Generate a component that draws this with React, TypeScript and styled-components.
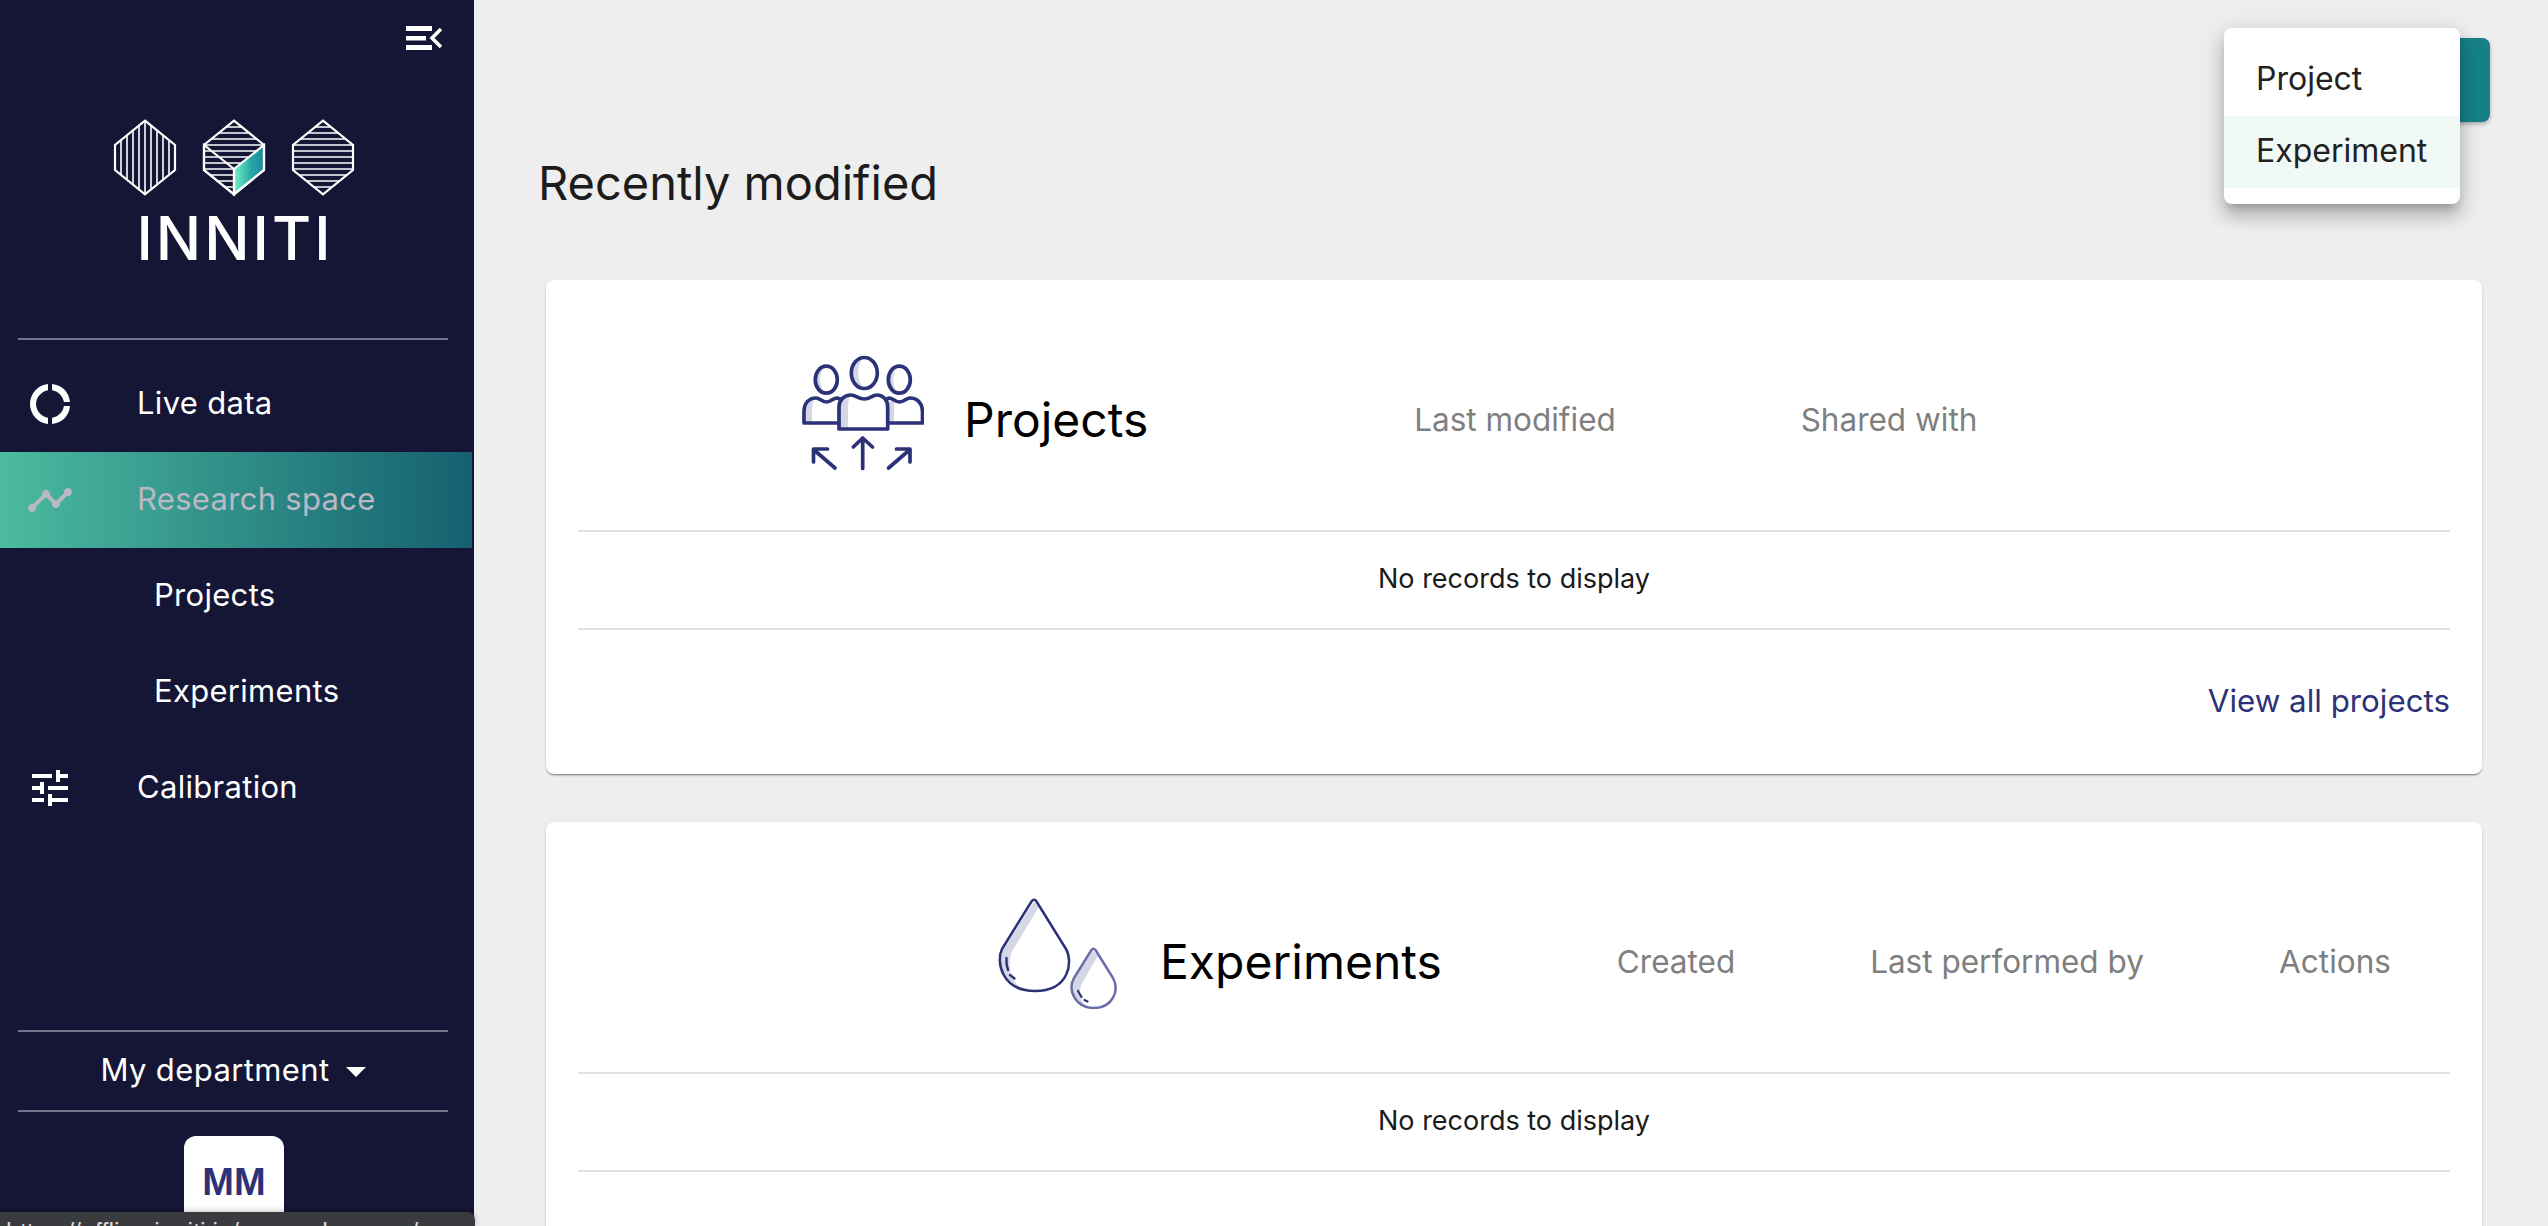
import React from "react";
import styled, { createGlobalStyle } from "styled-components";

const INK = "#2c3278";
const SHADE = "#d5d6e6";
const BASE = `"Inter", "Noto Sans", "Liberation Sans", sans-serif`;

const Global = createGlobalStyle`
  html, body { margin: 0; padding: 0; height: 100%; overflow: hidden; background: #eeeeee; }
  #root { height: 100%; }
  * { box-sizing: border-box; }
  body { font-family: ${BASE}; }
`;

const Page = styled.div`
  display: flex;
  height: 1226px;
  width: 2548px;
  position: relative;
  overflow: hidden;
`;

const Sidebar = styled.aside`
  width: 474px;
  flex: none;
  height: 100%;
  background: #151535;
  color: #fff;
  display: flex;
  flex-direction: column;
`;

const ToggleRow = styled.div`
  height: 118px;
  padding: 26px 32px 0 0;
  display: flex;
  justify-content: flex-end;
  align-items: flex-start;
`;

const LogoArt = styled.svg`
  display: block;
  width: 244px;
  height: 78px;
  margin-left: 112px;
`;

const Wordmark = styled.div`
  margin: 12px 4px 0 0;
  height: 60px;
  line-height: 60px;
  text-align: center;
  font-size: 60px;
  font-weight: 500;
  letter-spacing: 3px;
  color: #fff;
`;

const Rule = styled.div<{ $top?: number }>`
  height: 2px;
  margin: ${(p) => p.$top ?? 0}px 26px 0 18px;
  background: #74748a;
`;

const Nav = styled.nav`
  margin-top: 16px;
  display: flex;
  flex-direction: column;
`;

const NavItem = styled.div<{ $active?: boolean; $sub?: boolean }>`
  height: 96px;
  width: 472px;
  display: flex;
  align-items: center;
  padding-left: ${(p) => (p.$sub ? 154 : 26)}px;
  gap: 63px;
  font-size: 31px;
  letter-spacing: 0.3px;
  color: ${(p) => (p.$active ? "#b9b9c6" : "#fff")};
  background: ${(p) =>
    p.$active ? "linear-gradient(90deg, #4bbb9f 0%, #156070 100%)" : "transparent"};
`;

const NavLabel = styled.span`
  position: relative;
  top: -2px;
`;

const NavIcon = styled.svg`
  width: 48px;
  height: 48px;
  flex: none;
  fill: currentColor;
`;

const Bottom = styled.div`
  margin-top: auto;
  height: 196px;
  display: flex;
  flex-direction: column;
`;

const Department = styled.div`
  height: 78px;
  padding: 0 8px 3px 0;
  display: flex;
  align-items: center;
  justify-content: center;
  gap: 16px;
  font-size: 31px;
  letter-spacing: 0.4px;
`;

const Caret = styled.span`
  width: 0;
  height: 0;
  margin-top: 4px;
  border-left: 10px solid transparent;
  border-right: 10px solid transparent;
  border-top: 10px solid #fff;
`;

const TileRow = styled.div`
  padding: 24px 6px 0 0;
  display: flex;
  justify-content: center;
`;

const Tile = styled.div`
  width: 100px;
  height: 90px;
  border-radius: 12px 12px 0 0;
  background: linear-gradient(180deg, #fff 0%, #fff 75%, #ececec 100%);
  display: flex;
  align-items: center;
  justify-content: center;
  padding-top: 3px;
  color: ${INK};
  font-family: "Liberation Sans", sans-serif;
  font-weight: 700;
  font-size: 38px;
`;

const StatusBubble = styled.div`
  position: absolute;
  left: 0;
  bottom: 0;
  width: 475px;
  height: 14px;
  padding: 5px 0 0 6px;
  background: #3a3b3e;
  border-radius: 0 8px 0 0;
  box-shadow: 0 0 6px rgba(0, 0, 0, 0.25);
  color: #d8d8d8;
  font-family: "Liberation Sans", sans-serif;
  font-size: 25px;
  line-height: 30px;
  white-space: nowrap;
  overflow: hidden;
`;

const Main = styled.main`
  flex: 1;
  min-width: 0;
  height: 100%;
  padding: 38px 58px 0 64px;
  background: #eeeeee;
  display: flex;
  flex-direction: column;
`;

const Toolbar = styled.div`
  flex: none;
  height: 84px;
  display: flex;
  justify-content: flex-end;
`;

const AddWrap = styled.div`
  position: relative;
  width: 200px;
  height: 84px;
`;

const AddButton = styled.div`
  width: 100%;
  height: 100%;
  border-radius: 8px;
  background: #16808a;
  box-shadow: 0 2px 4px rgba(0, 0, 0, 0.3);
`;

const Menu = styled.div`
  position: absolute;
  top: -10px;
  right: 30px;
  width: 236px;
  padding: 16px 0;
  background: #fff;
  border-radius: 8px;
  box-shadow: 0 8px 8px -5px rgba(0, 0, 0, 0.2), 0 13px 16px 2px rgba(0, 0, 0, 0.14),
    0 5px 23px 3px rgba(0, 0, 0, 0.12);
`;

const MenuItem = styled.div<{ $hover?: boolean }>`
  height: 72px;
  padding: 0 0 3px 32px;
  display: flex;
  align-items: center;
  font-size: 32px;
  color: #222;
  background: ${(p) => (p.$hover ? "#f0f9f6" : "transparent")};
`;

const Title = styled.h1`
  margin: 31px 0 0;
  height: 60px;
  line-height: 60px;
  font-size: 47px;
  font-weight: 400;
  color: #1c1c1c;
`;

const Card = styled.section`
  flex: none;
  margin: 48px 8px 0;
  padding: 0 32px;
  background: #fff;
  border-radius: 8px;
  box-shadow: 0 2px 2px -1px rgba(0, 0, 0, 0.45), 0 1px 3px rgba(0, 0, 0, 0.12);
  &:first-of-type {
    margin-top: 67px;
  }
`;

const HeaderRow = styled.div<{ $cols: string }>`
  height: 252px;
  padding: 28px 0 0;
  display: grid;
  grid-template-columns: ${(p) => p.$cols};
  align-items: center;
  border-bottom: 2px solid #e0e0e0;
`;

const Lead = styled.div<{ $pad: number; $gap: number }>`
  display: flex;
  align-items: center;
  padding-left: ${(p) => p.$pad}px;
  gap: ${(p) => p.$gap}px;
`;

const CardTitle = styled.h2`
  margin: 0;
  font-size: 48px;
  font-weight: 400;
  color: #000;
`;

const ColumnHead = styled.div`
  text-align: center;
  font-size: 31.5px;
  color: #7f7f7f;
`;

const EmptyRow = styled.div`
  height: 98px;
  padding-bottom: 3px;
  display: flex;
  align-items: center;
  justify-content: center;
  border-bottom: 2px solid #e0e0e0;
  font-size: 27px;
  color: #1a1a1a;
`;

const CardFooter = styled.div`
  height: 144px;
  padding-bottom: 3px;
  display: flex;
  align-items: center;
  justify-content: flex-end;
  font-size: 31.3px;
  color: ${INK};
`;

const Drawing = styled.svg<{ $lift: number }>`
  display: block;
  flex: none;
  margin-top: -${(p) => p.$lift}px;
`;

const Toggle = () => (
  <svg width="36" height="24" viewBox="0 0 36 24" fill="#fff">
    <rect x="0" y="0" width="26" height="5" />
    <rect x="0" y="10" width="20" height="4.5" />
    <rect x="0" y="19" width="26" height="5" />
    <path d="M35 3 L26 12 L35 21" fill="none" stroke="#fff" strokeWidth="3.6" />
  </svg>
);

const range = (from: number, to: number, step: number) => {
  const out: number[] = [];
  for (let v = from; v <= to; v += step) out.push(v);
  return out;
};

const hex = (cx: number) =>
  `${cx},120.6 ${cx + 30},145 ${cx + 30},170 ${cx},194.4 ${cx - 30},170 ${cx - 30},145`;

const Logo = () => (
  <LogoArt viewBox="112 118 244 78">
    <defs>
      <clipPath id="hexA">
        <polygon points={hex(145)} />
      </clipPath>
      <clipPath id="hexB">
        <polygon points={hex(234)} />
      </clipPath>
      <clipPath id="hexC">
        <polygon points={hex(323)} />
      </clipPath>
      <linearGradient id="face" x1="0" y1="0" x2="1" y2="0">
        <stop offset="0" stopColor="#72f2c9" />
        <stop offset="0.55" stopColor="#2aa8a6" />
        <stop offset="1" stopColor="#1b8a9c" />
      </linearGradient>
    </defs>
    <g clipPath="url(#hexA)" stroke="#fff" strokeWidth="1.6">
      {range(121, 175, 6).map((x) => (
        <line key={x} x1={x} x2={x} y1="118" y2="196" />
      ))}
    </g>
    <polygon points={hex(145)} fill="none" stroke="#fff" strokeWidth="2.2" />
    <g clipPath="url(#hexB)" stroke="#fff" strokeWidth="1.6">
      {range(127, 188, 6).map((y) => (
        <line key={y} x1="204" x2="264" y1={y} y2={y} />
      ))}
    </g>
    <polygon points="234,169 264,145 264,170 234,194.4" fill="url(#face)" stroke="#fff" strokeWidth="2.2" />
    <polygon points="234,169 234,194.4 204,170 204,145" fill="none" stroke="#fff" strokeWidth="2.2" />
    <polygon points={hex(234)} fill="none" stroke="#fff" strokeWidth="2.2" />
    <g clipPath="url(#hexC)" stroke="#fff" strokeWidth="1.6">
      {range(127, 188, 6).map((y) => (
        <line key={y} x1="293" x2="353" y1={y} y2={y} />
      ))}
    </g>
    <polygon points={hex(323)} fill="none" stroke="#fff" strokeWidth="2.2" />
  </LogoArt>
);

const DonutIcon = () => (
  <NavIcon viewBox="0 0 24 24">
    <path d="M11 5.08V2c-5 .5-9 4.81-9 10s4 9.5 9 10v-3.08c-3-.48-6-3.4-6-6.92s3-6.44 6-6.92zM18.97 11H22c-.47-5-4-8.53-9-9v3.08C16 5.51 18.54 8 18.97 11zM13 18.92V22c5-.47 8.53-4 9-9h-3.03c-.43 3-2.97 5.49-5.97 5.92z" />
  </NavIcon>
);

const TimelineIcon = () => (
  <NavIcon viewBox="0 0 24 24">
    <path d="M23 8c0 1.1-.9 2-2 2-.18 0-.35-.02-.51-.07l-3.56 3.55c.05.16.07.34.07.52 0 1.1-.9 2-2 2s-2-.9-2-2c0-.18.02-.36.07-.52l-2.55-2.55c-.16.05-.34.07-.52.07s-.36-.02-.52-.07l-4.55 4.56c.05.16.07.33.07.51 0 1.1-.9 2-2 2s-2-.9-2-2 .9-2 2-2c.18 0 .35.02.51.07l4.56-4.55C8.02 9.36 8 9.18 8 9c0-1.1.9-2 2-2s2 .9 2 2c0 .18-.02.36-.07.52l2.55 2.55c.16-.05.34-.07.52-.07s.36.02.52.07l3.55-3.56C19.02 8.35 19 8.18 19 8c0-1.1.9-2 2-2s2 .9 2 2z" />
  </NavIcon>
);

const TuneIcon = () => (
  <NavIcon viewBox="0 0 24 24">
    <path d="M3 17v2h6v-2H3zM3 5v2h10V5H3zm10 16v-2h8v-2h-8v-2h-2v6h2zM7 9v2H3v2h4v2h2V9H7zm14 4v-2H11v2h10zm-6-4h2V7h4V5h-4V3h-2v6z" />
  </NavIcon>
);

const PeopleArt = () => (
  <Drawing $lift={12} width="122" height="116" viewBox="-1 -1 122 116">
    <g fill={SHADE}>
      <path d="M15 12 C10 16 10 30 15 36 L21 36 C16 30 16 16 21 12 Z" />
      <path d="M88 12 C83 16 83 30 88 36 L94 36 C89 30 89 16 94 12 Z" />
      <path d="M53 4 C47 9 47 24 53 30 L59 30 C54 24 54 9 59 4 Z" />
      <path d="M3 66 V55 C3 49 6 45 11 44 C9 48 9 52 9 66 Z" />
      <path d="M37 72 V50 C37 45 41 41 47 40 C45 44 45 50 45 72 Z" />
      <path d="M85 46 L92 44 C91 50 91 58 91 66 L85 66 Z" />
    </g>
    <g fill="none" stroke={INK} strokeWidth="3.7" strokeLinecap="round" strokeLinejoin="round">
      <ellipse cx="23.3" cy="23.7" rx="11" ry="13.5" />
      <ellipse cx="96.3" cy="23.7" rx="11" ry="13.5" />
      <ellipse cx="61.3" cy="17" rx="13" ry="15.5" />
      <path d="M36 67 H1 V56 C1 47 6 42 13 42 C17 42 18.5 46 23.5 46 C28.5 46 30 42 34 42 L37 43" />
      <path d="M85 67 H119.5 V56 C119.5 47 114 42 107 42 C103 42 101.5 46 96.5 46 C91.5 46 90 42 86 42 L84 43" />
      <path d="M36 73 H84.7 V51 C84.7 44 80 39 74 39 C69 39 67.5 43 61.3 43 C55 43 53 39 48 39 C41 39 36 44 36 51 Z" />
      <path d="M59.7 112.5 V83 M50.3 91 L59.7 82 L69.5 91" />
      <path d="M32 112 L10.5 93.5 M10.5 106 V93 H24.5" />
      <path d="M85.5 112 L107 93.5 M107 106 V93 H93.5" />
    </g>
  </Drawing>
);

const DropsArt = () => (
  <Drawing $lift={16} width="120" height="111" viewBox="38 29 120 111">
    <path d="M74 33 L42 82 C37 95 42 113 62 120 C50 112 47 96 52 82 L79 38 Z" fill={SHADE} />
    <path d="M71.5 32.5 Q74 29 76.5 32.5 L106 80 C113 92 110 122 75 122 C41 122 36 92 42 80 Z" fill="none" stroke={INK} strokeWidth="2.5" strokeLinejoin="round" />
    <path d="M46.5 89 C46 94 46.5 97 48 101 M50 106 L54.5 109.5" fill="none" stroke={INK} strokeWidth="2.4" strokeLinecap="round" />
    <path d="M133 82 L113 112 C108 124 114 134 127 138 C120 132 118 124 122 114 L138 87 Z" fill={SHADE} />
    <path d="M131.5 81 Q133.3 78.7 135.5 81 L153 109 C160 122 152 139 134 139 C116 139 107 122 114 109 Z" fill="none" stroke="#6a6ea5" strokeWidth="2.5" strokeLinejoin="round" />
    <path d="M118 122 L121.5 128 M124.5 131 L127.5 132.5" fill="none" stroke={INK} strokeWidth="2.2" strokeLinecap="round" />
  </Drawing>
);

export default function App() {
  return (
    <Page>
      <Global />
      <Sidebar>
        <ToggleRow>
          <Toggle />
        </ToggleRow>
        <Logo />
        <Wordmark>INNITI</Wordmark>
        <Rule $top={70} />
        <Nav>
          <NavItem>
            <DonutIcon />
            <NavLabel>Live data</NavLabel>
          </NavItem>
          <NavItem $active>
            <TimelineIcon />
            <NavLabel>Research space</NavLabel>
          </NavItem>
          <NavItem $sub>
            <NavLabel>Projects</NavLabel>
          </NavItem>
          <NavItem $sub>
            <NavLabel>Experiments</NavLabel>
          </NavItem>
          <NavItem>
            <TuneIcon />
            <NavLabel>Calibration</NavLabel>
          </NavItem>
        </Nav>
        <Bottom>
          <Rule />
          <Department>
            My department
            <Caret />
          </Department>
          <Rule />
          <TileRow>
            <Tile>MM</Tile>
          </TileRow>
        </Bottom>
      </Sidebar>
      <Main>
        <Toolbar>
          <AddWrap>
            <AddButton />
            <Menu>
              <MenuItem>Project</MenuItem>
              <MenuItem $hover>Experiment</MenuItem>
            </Menu>
          </AddWrap>
        </Toolbar>
        <Title>Recently modified</Title>
        <Card>
          <HeaderRow $cols="794px 286px 462px 1fr">
            <Lead $pad={224} $gap={40}>
              <PeopleArt />
              <CardTitle>Projects</CardTitle>
            </Lead>
            <ColumnHead>Last modified</ColumnHead>
            <ColumnHead>Shared with</ColumnHead>
          </HeaderRow>
          <EmptyRow>No records to display</EmptyRow>
          <CardFooter>View all projects</CardFooter>
        </Card>
        <Card>
          <HeaderRow $cols="980px 236px 426px 1fr">
            <Lead $pad={420} $gap={42}>
              <DropsArt />
              <CardTitle>Experiments</CardTitle>
            </Lead>
            <ColumnHead>Created</ColumnHead>
            <ColumnHead>Last performed by</ColumnHead>
            <ColumnHead>Actions</ColumnHead>
          </HeaderRow>
          <EmptyRow>No records to display</EmptyRow>
          <CardFooter />
        </Card>
      </Main>
      <StatusBubble>https://offline.inniti.io/research-space/</StatusBubble>
    </Page>
  );
}
